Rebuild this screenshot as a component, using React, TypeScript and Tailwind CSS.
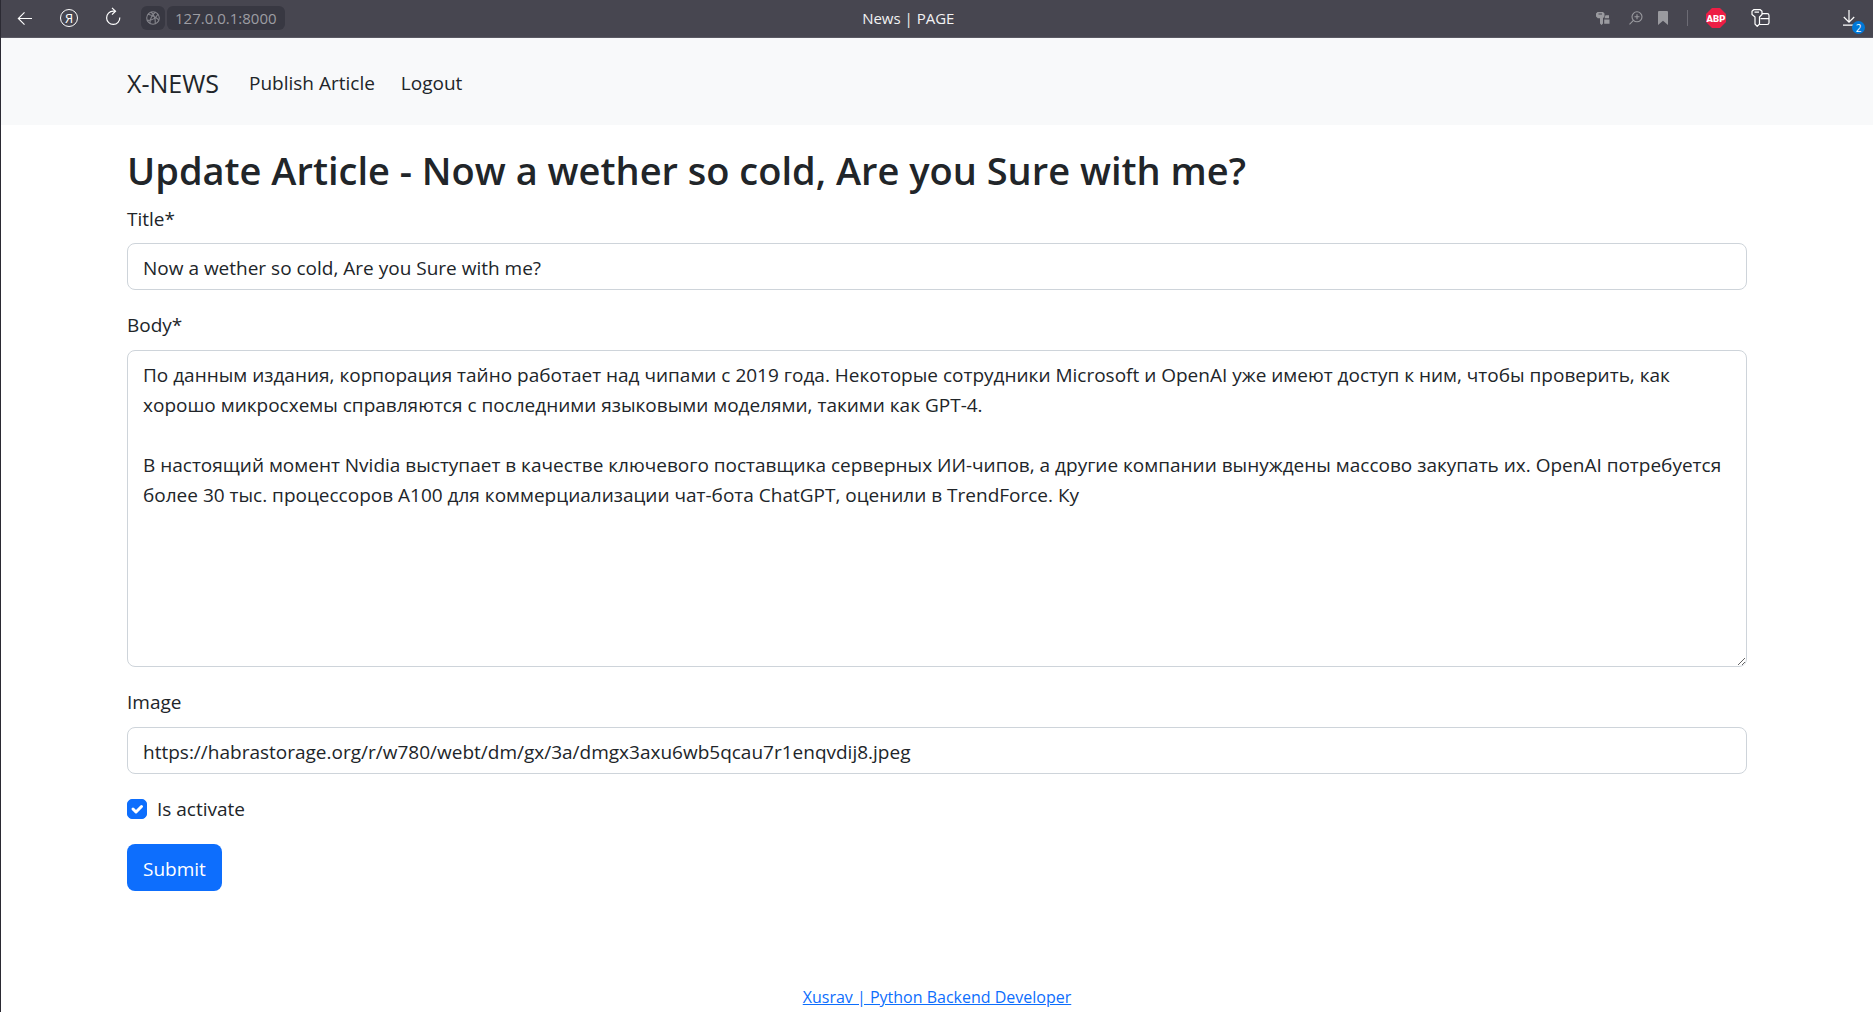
import React from 'react';

const FIELD =
  'block w-full rounded-lg border border-[#ced4da] bg-white px-[15px] text-[19px] leading-[30px] text-[#212529] outline-none';

const ARTICLE_BODY = `По данным издания, корпорация тайно работает над чипами с 2019 года. Некоторые сотрудники Microsoft и OpenAI уже имеют доступ к ним, чтобы проверить, как хорошо микросхемы справляются с последними языковыми моделями, такими как GPT-4.

В настоящий момент Nvidia выступает в качестве ключевого поставщика серверных ИИ-чипов, а другие компании вынуждены массово закупать их. OpenAI потребуется более 30 тыс. процессоров A100 для коммерциализации чат-бота ChatGPT, оценили в TrendForce. Ку`;

function BackIcon() {
  return (
    <svg width="16" height="16" viewBox="0 0 16 16" fill="none" stroke="currentColor" strokeWidth="1.1" aria-hidden="true">
      <path d="M15 8.5H1.5M7.5 2.3L1.3 8.5l6.2 6.2" />
    </svg>
  );
}

function ReloadIcon() {
  return (
    <svg width="18" height="20" viewBox="0 0 18 20" fill="none" stroke="currentColor" strokeWidth="1.2" aria-hidden="true">
      <path d="M15.8 10.5A6.6 6.600 0 1 1 9.200 4.200h2" />
      <path d="M8 .9l3.500 3.300L8 7.600" />
    </svg>
  );
}

function GlobeIcon() {
  return (
    <svg width="14" height="14" viewBox="0 0 14 14" fill="none" stroke="currentColor" strokeWidth="1.1" aria-hidden="true">
      <circle cx="7" cy="7" r="6.3" />
      <path d="M2 3.2C5 4 10.5 6.5 12.8 9M9.5 1.2C6.5 3 3.7 8.5 3.8 12.4M1 9.3C5 9.6 9.5 7.300 12 3.2M5 1c3 2.5 4.5 7 4.3 11.7" />
    </svg>
  );
}

function SmallKeyIcon() {
  return (
    <svg width="14" height="13" viewBox="0 0 14 13" fill="currentColor" aria-hidden="true">
      <path d="M1.500 0h5.500l1.500 1.500v3L7 6.200v5.300L5.500 13 4 11.500V6.200H1.800L0 4.500v-3zM2.500 1.500v1h3.500v-1z" fillRule="evenodd" />
      <path d="M9.500 3.200h3.500v3H8.500zM8.200 7.500h5.300v4.300H8.200z" />
    </svg>
  );
}

function ZoomIcon() {
  return (
    <svg width="14" height="14" viewBox="0 0 14 14" fill="none" stroke="currentColor" strokeWidth="1.1" aria-hidden="true">
      <circle cx="8" cy="5.8" r="5" />
      <path d="M4.4 9.4L.5 13.3M5.5 5.8h5M8 3.300v5" />
    </svg>
  );
}

function BookmarkIcon() {
  return (
    <svg width="10" height="14" viewBox="0 0 10 14" fill="currentColor" aria-hidden="true">
      <path d="M1 0h8a1 1 0 0 1 1 1v13L5 9.8 0 14V1a1 1 0 0 1 1-1z" />
    </svg>
  );
}

function AdblockIcon() {
  return (
    <svg width="20" height="20" viewBox="0 0 20 20" aria-hidden="true">
      <path d="M6 0h8l6 6v8l-6 6H6l-6-6V6z" fill="#ed1e45" />
      <text x="10" y="13.5" textAnchor="middle" fill="#fff" fontFamily="Roboto, sans-serif" fontWeight="900" fontSize="9.5">
        ABP
      </text>
    </svg>
  );
}

function KeyCardIcon() {
  return (
    <svg width="19" height="18" viewBox="0 0 19 18" fill="none" stroke="currentColor" strokeWidth="1.2" strokeLinejoin="round" aria-hidden="true">
      <path d="M2.7.7h6.600l1.700 1.600v3.200L8.500 8v7L6.200 17.300 4 15V8L1 5.500V2.300zM3.500 3.200h4.500" />
      <path d="M11 4.700h5.200c1 0 1.800.8 1.800 1.800v7.300c0 1-.8 1.700-1.800 1.700H8.500M9.500 9.700H18" />
    </svg>
  );
}

function DownloadIcon() {
  return (
    <svg width="12" height="16" viewBox="0 0 12 16" fill="none" stroke="currentColor" strokeWidth="1.2" aria-hidden="true">
      <path d="M6 0v12M.8 7L6 12.2 11.2 7M0 15.2h12" />
    </svg>
  );
}

function BrowserBar() {
  return (
    <div className="flex h-[38px] items-center border-b border-[#5a5963] bg-[#474650] px-4 pb-px text-white">
      <button type="button" aria-label="Back" className="flex w-4 justify-center">
        <BackIcon />
      </button>
      <button
        type="button"
        aria-label="Yandex home"
        className="ml-[27px] flex size-[18px] items-center justify-center rounded-full border border-white text-[13px] leading-none"
      >
        Я
      </button>
      <button type="button" aria-label="Reload" className="ml-[26px] flex w-[18px] justify-center pb-0.5">
        <ReloadIcon />
      </button>
      <button
        type="button"
        aria-label="Site information"
        className="ml-[19px] flex size-6 items-center justify-center rounded-md bg-[#383842] text-[#85858c]"
      >
        <GlobeIcon />
      </button>
      <button type="button" className="ml-0.5 h-6 rounded-md bg-[#383842] px-2 text-[15px] leading-6 text-[#9d9da3]">
        127.0.0.1:8000
      </button>
      <div className="flex-1 pr-16 text-center text-[15px] leading-6 text-[#f2f2f3]">News | PAGE</div>
      <div className="flex items-center text-[#9a9a9f]">
        <button type="button" aria-label="Passwords">
          <SmallKeyIcon />
        </button>
        <button type="button" aria-label="Zoom" className="ml-[19px]">
          <ZoomIcon />
        </button>
        <button type="button" aria-label="Bookmark" className="ml-[15px]">
          <BookmarkIcon />
        </button>
        <span className="ml-[19px] h-4 w-px bg-[#6c6b74]" />
        <button type="button" aria-label="Adblock Plus" className="ml-[18px]">
          <AdblockIcon />
        </button>
        <button type="button" aria-label="Password manager" className="ml-[25px] text-white">
          <KeyCardIcon />
        </button>
        <button type="button" aria-label="Downloads" className="relative ml-[73px] mr-0.5 text-white">
          <DownloadIcon />
          <span className="absolute -bottom-2 -right-[10px] flex size-[13px] items-center justify-center rounded-full bg-[#0078d7] text-[10px] leading-none">
            2
          </span>
        </button>
      </div>
    </div>
  );
}

function NavBar() {
  return (
    <nav className="bg-[#f8f9fa]">
      <div className="mx-auto flex h-[87px] max-w-[1650px] items-center px-[15px] pt-0.5">
        <a href="#home" className="text-[25px] leading-9">
          X-NEWS
        </a>
        <a href="#publish" className="ml-[30px] text-[19px] leading-[30px]">
          Publish Article
        </a>
        <a href="#logout" className="ml-[26px] text-[19px] leading-[30px]">
          Logout
        </a>
      </div>
    </nav>
  );
}

export default function App() {
  return (
    <div className="min-h-screen border-l border-[#2b2a33] bg-white font-['Open_Sans','Noto_Sans',sans-serif] text-[19px] leading-[30px] text-[#212529] [&_button]:shrink-0">
      <BrowserBar />
      <NavBar />
      <main className="mx-auto max-w-[1650px] px-[15px] pt-[21px]">
        <h1 className="mb-[10px] text-[38px] font-semibold leading-[48px]">
          Update Article - Now a wether so cold, Are you Sure with me?
        </h1>
        <form>
          <div className="mb-5">
            <label htmlFor="title" className="mb-[9px] block">
              Title*
            </label>
            <input id="title" type="text" defaultValue="Now a wether so cold, Are you Sure with me?" className={`${FIELD} h-[47px] pt-0.5`} />
          </div>
          <div className="mb-5">
            <label htmlFor="body" className="mb-[10px] block">
              Body*
            </label>
            <textarea id="body" rows={10} defaultValue={ARTICLE_BODY} spellCheck={false} className={`${FIELD} resize-y pt-[9px] pb-1.5`} />
          </div>
          <div className="mb-5">
            <label htmlFor="image" className="mb-[10px] block">
              Image
            </label>
            <input
              id="image"
              type="text"
              defaultValue="https://habrastorage.org/r/w780/webt/dm/gx/3a/dmgx3axu6wb5qcau7r1enqvdij8.jpeg"
              className={`${FIELD} h-[47px] pt-0.5`}
            />
          </div>
          <div className="mb-5 flex items-center">
            <span className="relative flex size-5">
              <input
                id="active"
                type="checkbox"
                defaultChecked
                className="peer size-5 appearance-none rounded-[5px] border border-[#ced4da] checked:border-[#0d6efd] checked:bg-[#0d6efd]"
              />
              <svg
                viewBox="0 0 20 20"
                className="pointer-events-none absolute inset-0 hidden size-5 peer-checked:block"
                fill="none"
                stroke="#fff"
                strokeWidth="3"
                strokeLinecap="round"
                strokeLinejoin="round"
                aria-hidden="true"
              >
                <path d="M6 10l3 3 5.5-5.5" />
              </svg>
            </span>
            <label htmlFor="active" className="ml-[10px]">
              Is activate
            </label>
          </div>
          <button type="submit" className="h-[47px] rounded-lg bg-[#0d6efd] px-4 pt-0.5 text-white">
            Submit
          </button>
        </form>
      </main>
      <footer className="pt-[91px] text-center text-[16px] leading-[30px]">
        <a href="#author" className="text-[#0d6efd] underline">
          Xusrav | Python Backend Developer
        </a>
      </footer>
    </div>
  );
}
